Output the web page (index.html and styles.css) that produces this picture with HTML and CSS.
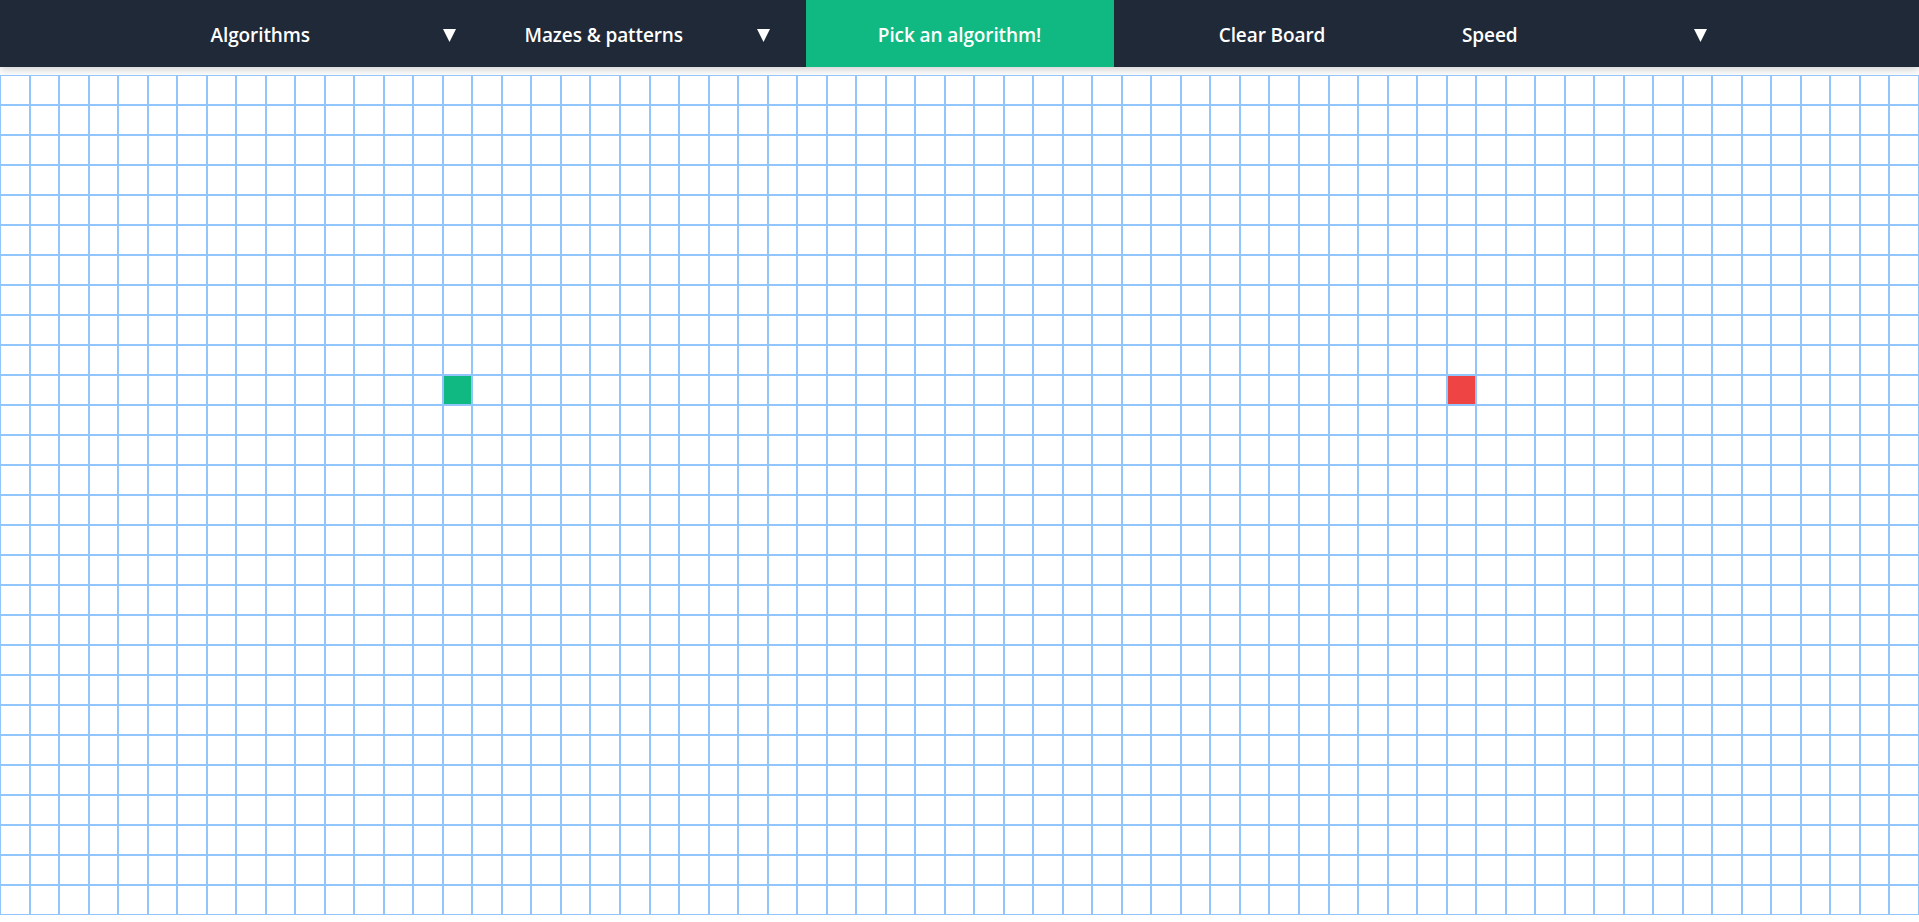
FILE: index.html
```html
<!DOCTYPE html>
<html lang="en">
<head>
<meta charset="utf-8">
<title>Pathfinding Visualizer</title>
<link rel="stylesheet" href="styles.css">
</head>
<body>
<nav class="navbar">
  <div class="nav-inner">
    <button class="nav-item dropdown">
      <span>Algorithms</span>
      <svg class="caret" width="13" height="13" viewBox="0 0 13 13"><polygon points="0,0 13,0 6.5,13" fill="#fff"/></svg>
    </button>
    <button class="nav-item dropdown">
      <span>Mazes &amp; patterns</span>
      <svg class="caret" width="13" height="13" viewBox="0 0 13 13"><polygon points="0,0 13,0 6.5,13" fill="#fff"/></svg>
    </button>
    <button class="nav-item visualize">Pick an algorithm!</button>
    <button class="nav-item plain">Clear Board</button>
    <button class="nav-item dropdown speed">
      <span>Speed</span>
      <svg class="caret" width="13" height="13" viewBox="0 0 13 13"><polygon points="0,0 13,0 6.5,13" fill="#fff"/></svg>
    </button>
  </div>
</nav>
<main class="board" id="board"></main>
<script src="script.js"></script>
</body>
</html>
```

FILE: styles.css
```css
* { box-sizing: border-box; }
html, body {
  margin: 0;
  padding: 0;
  background: #ffffff;
}
body {
  font-family: "Open Sans", "Noto Sans", "DejaVu Sans", sans-serif;
}
.navbar {
  height: 67px;
  background: #1f2937;
  box-shadow: 0 3px 8px rgba(0, 0, 0, 0.18);
}
.nav-inner {
  height: 100%;
  display: flex;
  justify-content: center;
}
.nav-item {
  height: 100%;
  width: 314px;
  flex: 0 0 auto;
  border: 0;
  margin: 0;
  background: transparent;
  color: #ffffff;
  font-family: inherit;
  font-size: 19px;
  font-weight: 600;
  letter-spacing: -0.1px;
  display: flex;
  align-items: center;
  padding: 2px 0 0 0;
  cursor: pointer;
}
.dropdown {
  justify-content: space-between;
  padding-left: 33px;
  padding-right: 36px;
}
.speed {
  width: 311px;
  padding-left: 31.5px;
  padding-right: 34.5px;
}
.caret {
  display: block;
  margin-top: 1px;
}
.visualize {
  width: 308px;
  background: #10b981;
  justify-content: center;
}
.plain {
  width: 317px;
  justify-content: center;
}
.board {
  margin-top: 8px;
  background: #ffffff;
  display: grid;
  grid-template-columns: repeat(65, 1fr);
  grid-auto-rows: 30px;
}
.cell {
  border: 1px solid #93c5fd;
  background: #ffffff;
}
.cell.start { background: #10b981; }
.cell.end { background: #ef4444; }
```

FILE: script.js
```js
(function () {
  var board = document.getElementById('board');
  var rows = 28, cols = 65;
  var frag = document.createDocumentFragment();
  for (var r = 0; r < rows; r++) {
    for (var c = 0; c < cols; c++) {
      var d = document.createElement('div');
      d.className = 'cell';
      if (r === 10 && c === 15) d.className += ' start';
      if (r === 10 && c === 49) d.className += ' end';
      frag.appendChild(d);
    }
  }
  board.appendChild(frag);
})();
```
